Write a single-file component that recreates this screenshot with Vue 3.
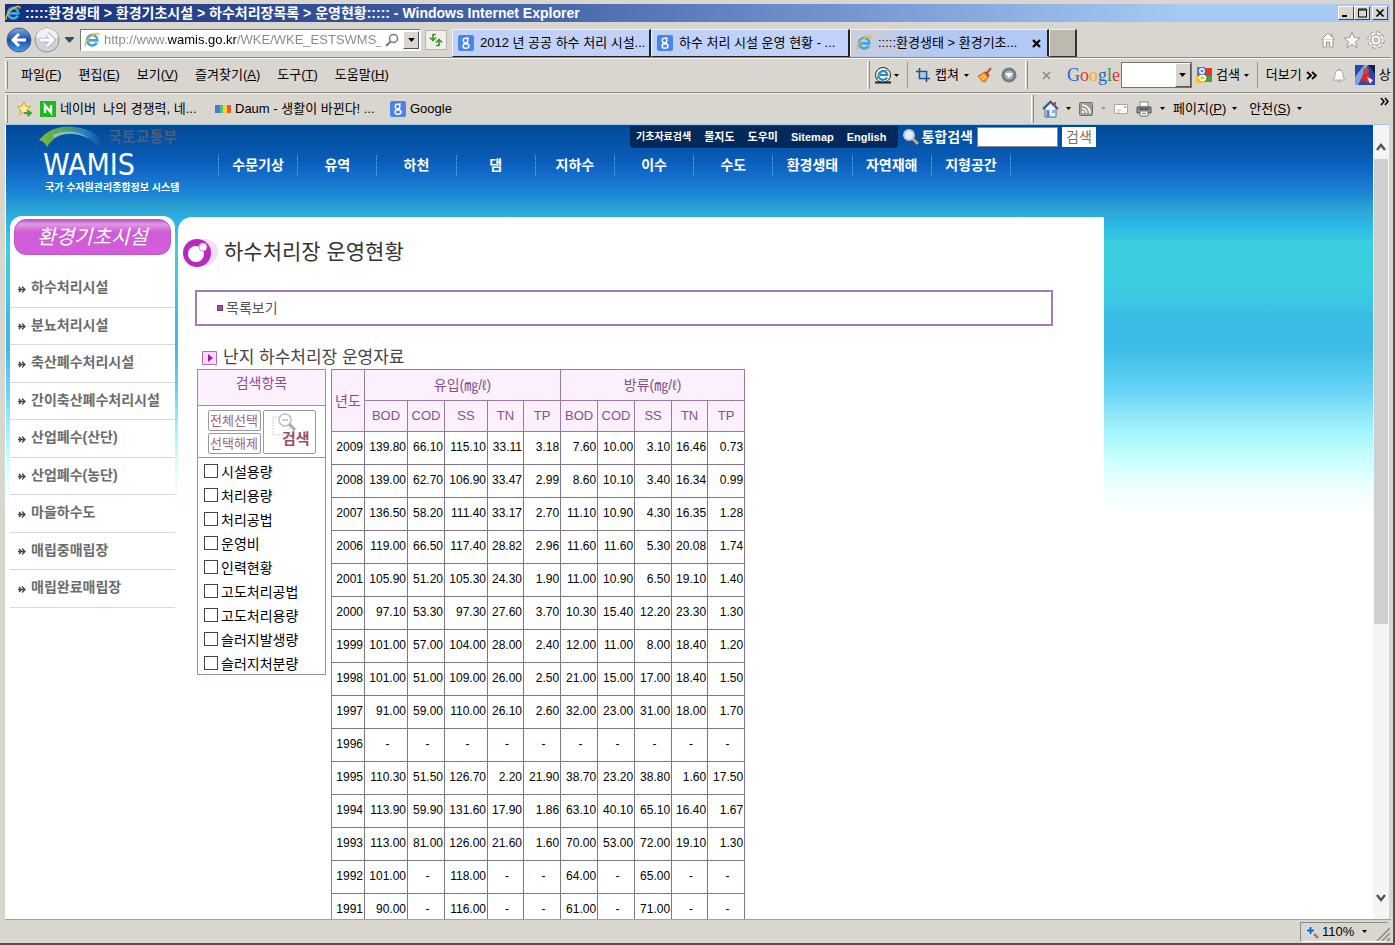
<script setup>
import { ref } from 'vue'

const url = ref('http://www.wamis.go.kr/WKE/WKE_ESTSWMS_LIST.aspx')
const keyword = ref('')
const toolbarKeyword = ref('')

const menus = [
  ['파일', 'F'], ['편집', 'E'], ['보기', 'V'], ['즐겨찾기', 'A'], ['도구', 'T'], ['도움말', 'H'],
]
const tabs = [
  { icon: 'g8', text: '2012 년 공공 하수 처리 시설...' },
  { icon: 'g8', text: '하수 처리 시설 운영 현황 - ...' },
  { icon: 'ie', text: ':::::환경생태 > 환경기초...', active: true },
]
const nav = ['수문기상', '유역', '하천', '댐', '지하수', '이수', '수도', '환경생태', '자연재해', '지형공간']
const utils = ['기초자료검색', '물지도', '도우미', 'Sitemap', 'English']
const side = [
  '하수처리시설', '분뇨처리시설', '축산폐수처리시설', '간이축산폐수처리시설', '산업폐수(산단)',
  '산업폐수(농단)', '마을하수도', '매립중매립장', '매립완료매립장',
]
const filters = ref([
  '시설용량', '처리용량', '처리공법', '운영비', '인력현황', '고도처리공법', '고도처리용량', '슬러지발생량', '슬러지처분량',
].map((name) => ({ name, on: false })))
const setAll = (on) => filters.value.forEach((f) => { f.on = on })

const columns = ['BOD', 'COD', 'SS', 'TN', 'TP', 'BOD', 'COD', 'SS', 'TN', 'TP']
const rows = [
  '2009 139.80 66.10 115.10 33.11 3.18 7.60 10.00 3.10 16.46 0.73',
  '2008 139.00 62.70 106.90 33.47 2.99 8.60 10.10 3.40 16.34 0.99',
  '2007 136.50 58.20 111.40 33.17 2.70 11.10 10.90 4.30 16.35 1.28',
  '2006 119.00 66.50 117.40 28.82 2.96 11.60 11.60 5.30 20.08 1.74',
  '2001 105.90 51.20 105.30 24.30 1.90 11.00 10.90 6.50 19.10 1.40',
  '2000 97.10 53.30 97.30 27.60 3.70 10.30 15.40 12.20 23.30 1.30',
  '1999 101.00 57.00 104.00 28.00 2.40 12.00 11.00 8.00 18.40 1.20',
  '1998 101.00 51.00 109.00 26.00 2.50 21.00 15.00 17.00 18.40 1.50',
  '1997 91.00 59.00 110.00 26.10 2.60 32.00 23.00 31.00 18.00 1.70',
  '1996 - - - - - - - - - -',
  '1995 110.30 51.50 126.70 2.20 21.90 38.70 23.20 38.80 1.60 17.50',
  '1994 113.90 59.90 131.60 17.90 1.86 63.10 40.10 65.10 16.40 1.67',
  '1993 113.00 81.00 126.00 21.60 1.60 70.00 53.00 72.00 19.10 1.30',
  '1992 101.00 - 118.00 - - 64.00 - 65.00 - -',
  '1991 90.00 - 116.00 - - 61.00 - 71.00 - -',
].map((r) => r.split(' '))
</script>

<template>
  <div class="window">
    <svg class="sprite" aria-hidden="true">
      <symbol id="ie" viewBox="0 0 16 16">
        <path d="M12.8 10.6A5.2 5.2 0 1 1 13.4 8.4H4.6" fill="none" stroke="#3fa9e6" stroke-width="2.6" />
        <path d="M1.6 14.6C-.4 12 4 5.600 9 2.800 12.500 .9 15.300 .8 14.800 3.600" fill="none" stroke="#f0b92c" stroke-width="1.4" />
      </symbol>
      <symbol id="g8" viewBox="0 0 16 16">
        <rect width="16" height="16" rx="2" fill="#4a86e8" />
        <circle cx="7.600" cy="5.400" r="2.300" fill="none" stroke="#fff" stroke-width="1.400" />
        <ellipse cx="8" cy="11" rx="3" ry="2.300" fill="none" stroke="#fff" stroke-width="1.400" />
        <path d="M8 3h3M8.500 7.500l1 1.400" stroke="#fff" stroke-width="1.200" />
      </symbol>
      <symbol id="down" viewBox="0 0 5 3"><path d="M0 0h5L2.500 3z" fill="currentColor" /></symbol>
    </svg>

    <header class="titlebar">
      <svg class="i16"><use href="#ie" /></svg>
      <h1>:::::환경생태 &gt; 환경기초시설 &gt; 하수처리장목록 &gt; 운영현황::::: - Windows Internet Explorer</h1>
      <div class="winbtns">
        <button aria-label="최소화"><svg viewBox="0 0 12 12"><path d="M2 9h5" stroke="#000" stroke-width="2" /></svg></button>
        <button aria-label="최대화"><svg viewBox="0 0 12 12"><path d="M2.500 2h8v8h-8zM2 3h9" fill="none" stroke="#000" /></svg></button>
        <button aria-label="닫기" class="close"><svg viewBox="0 0 12 12"><path d="M2.500 2.500l7 7M9.500 2.500l-7 7" stroke="#000" stroke-width="1.600" /></svg></button>
      </div>
    </header>

    <div class="addressrow">
      <button class="plain" aria-label="뒤로">
        <svg class="i26" viewBox="0 0 26 26">
          <defs><linearGradient id="bk" x1="0" y1="0" x2="0" y2="1"><stop offset="0" stop-color="#7fa6dc" /><stop offset=".5" stop-color="#1d4fae" /><stop offset="1" stop-color="#3fa4ee" /></linearGradient></defs>
          <circle cx="13" cy="13" r="12" fill="url(#bk)" stroke="#50617c" />
          <path d="M20 13H8M13 7l-6 6 6 6" fill="none" stroke="#fff" stroke-width="3" />
        </svg>
      </button>
      <button class="plain" aria-label="앞으로">
        <svg class="i26" viewBox="0 0 26 26">
          <circle cx="13" cy="13" r="12" fill="#cfd3d9" stroke="#8d939e" />
          <path d="M2 11a11 10 0 0 1 22 0z" fill="#eef0f3" />
          <path d="M6 13h12M13 7l6 6-6 6" fill="none" stroke="#a9afba" stroke-width="4.600" />
          <path d="M6 13h12M13 7l6 6-6 6" fill="none" stroke="#fff" stroke-width="2.800" />
        </svg>
      </button>
      <button class="plain hist" aria-label="최근 페이지"><svg viewBox="0 0 9 6"><path d="M0 0h9v1L4.500 6 0 1z" fill="#23566e" /></svg></button>
      <div class="address">
        <svg class="i16"><use href="#ie" /></svg>
        <input v-model="url" aria-label="주소" />
        <svg class="i14" viewBox="0 0 14 14"><circle cx="8.500" cy="5.500" r="4" fill="none" stroke="#777" stroke-width="1.500" /><path d="M5.500 8.500L1 13" stroke="#777" stroke-width="2" /></svg>
        <button class="drop" aria-label="주소 목록"><svg class="arrow big"><use href="#down" /></svg></button>
      </div>
      <button class="refresh" aria-label="새로 고침"><svg class="i16" viewBox="0 0 16 16"><path d="M8 2.500H5v5M2 5.500l3 3 3-3" fill="none" stroke="#3e9a34" stroke-width="1.700" /><path d="M8 13.500h3v-5M8 10.500l3-3 3 3" fill="none" stroke="#3e9a34" stroke-width="1.700" /></svg></button>
      <nav class="tabs" aria-label="탭">
        <button v-for="t in tabs" :key="t.text" class="tab" :class="{ active: t.active }">
          <svg class="i16"><use :href="'#' + t.icon" /></svg>
          <span>{{ t.text }}</span>
          <svg v-if="t.active" class="i9" viewBox="0 0 9 9"><path d="M1 1l7 7M8 1L1 8" stroke="#000" stroke-width="2.200" /></svg>
        </button>
        <button class="newtab" aria-label="새 탭"></button>
      </nav>
      <div class="tools">
        <svg class="i18" viewBox="0 0 18 18"><path d="M2 9l7-7 7 7M4 8v8h3.500v-5h3v5H14V8M13 6V2.500" fill="#fff" stroke="#a09a92" /></svg>
        <svg class="i18" viewBox="0 0 18 18"><path d="M9 1l2.200 5.600 5.800.4-4.500 3.700 1.500 5.800L9 13.300l-5 3.200 1.500-5.800L1 7l5.800-.4z" fill="#fff" stroke="#a09a92" /></svg>
        <svg class="i18" viewBox="0 0 18 18"><circle cx="9" cy="9" r="7" fill="none" stroke="#a09a92" stroke-width="3.400" stroke-dasharray="3.300 2.200" /><circle cx="9" cy="9" r="6.500" fill="none" stroke="#fff" stroke-width="2.500" stroke-dasharray="2.500 2.600" /><circle cx="9" cy="9" r="5" fill="#fff" stroke="#a09a92" /><circle cx="9" cy="9" r="2" fill="#d9d5cf" stroke="#a09a92" /></svg>
      </div>
    </div>

    <div class="bar">
      <i class="grip"></i>
      <nav class="menus" aria-label="메뉴">
        <button v-for="m in menus" :key="m[1]" class="plain">{{ m[0] }}(<u>{{ m[1] }}</u>)</button>
      </nav>
      <div class="addons">
        <i class="grip"></i>
        <button class="plain duo iebtn" aria-label="브라우저 도구">
          <svg class="i18" viewBox="0 0 18 18"><circle cx="9" cy="9" r="7.500" fill="#f3fbff" stroke="#222" /><path d="M13 11.500A4.500 4.500 0 1 1 13.500 9H6" fill="none" stroke="#2b86c9" stroke-width="2" /><path d="M3 14C3 9 9 4 14 4" fill="none" stroke="#49aa4a" /><path d="M1 16.500h16" stroke="#222" stroke-width="2" /></svg>
          <svg class="arrow"><use href="#down" /></svg>
        </button>
        <i class="sep"></i>
        <button class="plain duo cap">
          <svg class="i14" viewBox="0 0 14 14"><path d="M3.500 0v10.500H14M0 3.500h10.500V14" fill="none" stroke="#1f4f85" stroke-width="1.600" /><path d="M4.500 4.500h5v5h-5z" fill="#8fd0ef" /></svg>
          캡쳐 <svg class="arrow"><use href="#down" /></svg>
        </button>
        <svg class="i16" viewBox="0 0 16 16"><path d="M14 1L9 7" stroke="#b0562a" stroke-width="2" /><path d="M8 5l4 4-4 6-3-1-4-5z" fill="#f0a028" stroke="#a86414" stroke-width=".8" /><path d="M8 5l4 4" stroke="#c33" stroke-width="2" /><path d="M4 9l3 4M6 7.500l3 4" stroke="#ffe090" /></svg>
        <svg class="i16 orb" viewBox="0 0 16 16"><circle cx="8" cy="8" r="7.500" fill="#717c87" /><circle cx="8" cy="8" r="4.500" fill="#a8b4be" /><path d="M4 6h8l-4 5z" fill="#fff" /></svg>
        <i class="grip orb"></i>
        <button class="plain xbtn" aria-label="도구 모음 닫기"><svg class="i9" viewBox="0 0 9 9"><path d="M1 1l7 7M8 1L1 8" stroke="#8d8983" stroke-width="1.600" /></svg></button>
        <span class="glogo"><span class="cb">G</span><span class="cr">o</span><span class="cy">o</span><span class="cb">g</span><span class="cg">l</span><span class="cr">e</span></span>
        <div class="gsearch">
          <input v-model="toolbarKeyword" aria-label="Google 검색" />
          <button class="drop" aria-label="검색어 목록"><svg class="arrow big"><use href="#down" /></svg></button>
        </div>
        <button class="plain duo gbtn">
          <svg class="i16" viewBox="0 0 16 16"><path d="M1 0h8v9H1z" fill="#4a7be0" /><path d="M9 1h7v8H9z" fill="#d93a2f" /><path d="M9 9h7v6H9z" fill="#3aa34c" /><path d="M0 9h9v7H0z" fill="#f4c42c" /><circle cx="6" cy="4" r="2.200" fill="none" stroke="#fff" stroke-width="1.500" /><ellipse cx="6.500" cy="11" rx="3" ry="2.500" fill="none" stroke="#fff" stroke-width="1.500" /></svg>
          검색 <svg class="arrow"><use href="#down" /></svg>
        </button>
        <i class="sep dotted"></i>
        <button class="plain more">더보기 <svg class="chev" viewBox="0 0 11 9"><path d="M1 1l4 3.500L1 8M6 1l4 3.500L6 8" fill="none" stroke="#000" stroke-width="1.800" /></svg></button>
        <svg class="i16 bell" viewBox="0 0 16 16"><path d="M2 13c2-2 2-4 2-6a4 4 0 0 1 8 0c0 2 0 4 2 6zM6.500 14.500h3M8 1v2" fill="#fff" stroke="#aaa59e" /></svg>
        <svg class="i20 avatar" viewBox="0 0 20 20"><path d="M0 0h20v20H0z" fill="#2447a8" /><path d="M0 12L9 0h4L3 20H0z" fill="#79a4e8" /><path d="M13 0h7v9z" fill="#151d4f" /><circle cx="11" cy="6" r="3" fill="#c04a3c" /><path d="M5 18l3-9h6l4 9-4-3-3 5-2-5z" fill="#d42a30" /><path d="M12 12l6 3-3 4z" fill="#e3e8f5" /></svg>
        <span class="user">상보</span>
      </div>
    </div>

    <div class="bar favs">
      <i class="grip"></i>
      <svg class="i16" viewBox="0 0 16 16"><path d="M7 1l1.800 4.200 4.700.4-3.600 3.200 1 4.700L7 11l-4.200 2.500 1.100-4.700L.4 5.600l4.700-.4z" fill="#fff0a0" stroke="#e0a02c" /><path d="M7 12h6M10.500 9.500L14 12l-3.500 3" fill="none" stroke="#3fa43d" stroke-width="2" /></svg>
      <a href="#naver" class="fav"><svg class="i16" viewBox="0 0 16 16"><path d="M0 0h16v16H0z" fill="#1bb81b" /><path d="M5 12V4.500l6 7V4" fill="none" stroke="#fff" stroke-width="2.400" /></svg>네이버&nbsp; 나의 경쟁력, 네...</a>
      <a href="#daum" class="fav"><svg class="i16" viewBox="0 0 16 16"><path d="M0 4h5v8H0z" fill="#3e7be0" /><path d="M5 4h4v8H5z" fill="#5bbd6c" /><path d="M8 4h4v8H8z" fill="#ffd32e" /><path d="M12 4h4v8h-4z" fill="#f0592b" /></svg>Daum - 생활이 바뀐다! ...</a>
      <a href="#google" class="fav"><svg class="i16"><use href="#g8" /></svg>Google</a>
      <div class="cmds">
        <i class="grip"></i>
        <button class="plain duo home" aria-label="홈">
          <svg class="i18" viewBox="0 0 18 18"><path d="M3 8v9h11V8L8.500 3z" fill="#eef3fb" stroke="#53658f" /><path d="M1 9l7.500-7.500L16 9" fill="none" stroke="#37518c" stroke-width="1.800" /><path d="M4.500 10h3v7h-3z" fill="#5d82c4" /><path d="M10 10h3v3h-3z" fill="#87aee0" /><path d="M12 2h2v4h-2z" fill="#b05040" /></svg>
          <svg class="arrow"><use href="#down" /></svg>
        </button>
        <button class="plain duo dim" aria-label="피드">
          <svg class="i14" viewBox="0 0 14 14"><rect x=".5" y=".5" width="13" height="13" rx="1" fill="#a09c96" stroke="#75716b" /><path d="M3 6.500a4.500 4.500 0 0 1 4.500 4.500M3 3a8 8 0 0 1 8 8" fill="none" stroke="#fff" stroke-width="1.600" /><circle cx="4" cy="10" r="1.200" fill="#fff" /></svg>
          <svg class="arrow"><use href="#down" /></svg>
        </button>
        <svg class="i14" viewBox="0 0 14 14"><path d="M.5 2.500h13v9H.5z" fill="#fff" stroke="#aaa59e" /><path d="M3 8h4M3 10h3" stroke="#bbb" /><path d="M10 4h2v2h-2z" fill="#c9a8a0" /></svg>
        <button class="plain duo print" aria-label="인쇄">
          <svg class="i16" viewBox="0 0 16 16"><path d="M4 1h8v5H4z" fill="#fff" stroke="#888" /><path d="M1 6h14v6H1z" fill="#8f949a" stroke="#555" /><path d="M3 8h10" stroke="#333" /><path d="M4 10h8v5H4z" fill="#f6fbf6" stroke="#777" /><path d="M6 12.500h4" stroke="#4a9a58" /></svg>
          <svg class="arrow"><use href="#down" /></svg>
        </button>
        <button class="plain duo word"><span>페이지(<u>P</u>)</span><svg class="arrow"><use href="#down" /></svg></button>
        <button class="plain duo word"><span>안전(<u>S</u>)</span><svg class="arrow"><use href="#down" /></svg></button>
        <button class="plain overflow" aria-label="더 보기"><svg class="chev" viewBox="0 0 11 9"><path d="M1 1l3 3.500L1 8M5 1l3 3.500L5 8" fill="none" stroke="#000" stroke-width="1.500" /></svg></button>
      </div>
    </div>

    <div class="view">
      <div class="page">
        <div class="site">
          <header class="head">
            <a href="#home" class="logo">
              <span class="ministry">
                <svg viewBox="0 0 66 22">
                  <defs><linearGradient id="sw" x1="0" x2="1"><stop offset="0" stop-color="#7dbb3c" /><stop offset=".45" stop-color="#4d9c62" /><stop offset=".7" stop-color="#2a7fc0" /><stop offset="1" stop-color="#0a4ea0" /></linearGradient></defs>
                  <path d="M0 14C10 2 24-1 36 1 52 3 60 9 64 18L58 20C52 12 44 8 33 7 22 7 14 12 8 21 6 17 4 15 0 14z" fill="url(#sw)" />
                  <path d="M14 9C26 3 42 5 50 13 40 7 26 6 14 12z" fill="#9ed2e8" opacity=".7" />
                </svg>
                국토교통부
              </span>
              <strong>WAMIS</strong>
              <small>국가 수자원관리종합정보 시스템</small>
            </a>
            <div class="headmain">
              <div class="top">
                <nav class="utils" aria-label="바로가기"><a v-for="u in utils" :key="u" :href="'#' + u">{{ u }}</a></nav>
                <form class="search" @submit.prevent>
                  <svg class="i18" viewBox="0 0 18 18"><path d="M10 10l6 6" stroke="#c9a67c" stroke-width="3" /><circle cx="7" cy="7" r="5" fill="#dcecf8" stroke="#b9c6d6" stroke-width="2" /></svg>
                  <label for="kw">통합검색</label>
                  <input id="kw" v-model="keyword" />
                  <button>검색</button>
                </form>
              </div>
              <nav class="gnb" aria-label="주 메뉴"><a v-for="n in nav" :key="n" :href="'#' + n">{{ n }}</a></nav>
            </div>
          </header>

          <div class="body">
            <aside class="side">
              <h2>환경기초시설</h2>
              <ul>
                <li v-for="s in side" :key="s">
                  <a :href="'#' + s"><svg class="i9" viewBox="0 0 9 9"><path d="M0 4.500h7M4 1.500l3 3-3 3M1 2l2 2M1 7l2-2" fill="none" stroke="#444" stroke-width="1.300" /></svg>{{ s }}</a>
                </li>
              </ul>
            </aside>
            <main class="main">
              <h2 class="title">
                <svg viewBox="0 0 36 32">
                  <circle cx="22" cy="16" r="13" fill="#fbdcfa" />
                  <circle cx="14" cy="17" r="14" fill="#b829c0" />
                  <circle cx="13" cy="18" r="8" fill="#fff" />
                  <circle cx="20" cy="11" r="4" fill="#fff" stroke="#d88add" />
                </svg>
                하수처리장 운영현황
              </h2>
              <div class="listbox"><a href="#list"><i></i>목록보기</a></div>
              <h3><svg viewBox="0 0 15 14"><path d="M.5 .5h14v13H.5z" fill="#fbd9fb" stroke="#b46cba" /><path d="M6 3l5 4-5 4z" fill="#a01ca8" /></svg>난지 하수처리장 운영자료</h3>
              <div class="data">
                <form class="filter" @submit.prevent>
                  <h4>검색항목</h4>
                  <div class="fbtns">
                    <div>
                      <button type="button" @click="setAll(true)">전체선택</button>
                      <button type="button" @click="setAll(false)">선택해제</button>
                    </div>
                    <button class="go">
                      <svg viewBox="0 0 28 28"><path d="M8 6H1v18h10" fill="none" stroke="#ccc" stroke-dasharray="2 1" /><circle cx="13" cy="9" r="6" fill="#fff" stroke="#ccc" stroke-width="2" /><path d="M17 13l6 6" stroke="#aaa" stroke-width="3" /><path d="M10 9h6" stroke="#ccc" stroke-width="2" /></svg>
                      <span>검색</span>
                    </button>
                  </div>
                  <label v-for="f in filters" :key="f.name"><input v-model="f.on" type="checkbox" />{{ f.name }}</label>
                </form>
                <table>
                  <colgroup><col class="w33" /><col class="w43" /><col /><col class="w43" /><col class="w36" /><col /><col /><col /><col /><col class="w36" /><col /></colgroup>
                  <thead>
                    <tr class="groups"><th rowspan="2">년도</th><th colspan="5">유입(㎎/ℓ)</th><th colspan="5">방류(㎎/ℓ)</th></tr>
                    <tr><th v-for="(c, i) in columns" :key="i">{{ c }}</th></tr>
                  </thead>
                  <tbody>
                    <tr v-for="r in rows" :key="r[0]">
                      <td v-for="(v, i) in r" :key="i" :class="{ none: v === '-' }">{{ v }}</td>
                    </tr>
                  </tbody>
                </table>
              </div>
            </main>
          </div>
        </div>
      </div>
      <div class="scroll" aria-hidden="true">
        <svg viewBox="0 0 14 34"><path d="M3 25l4-5 4 5" fill="none" stroke="#555" stroke-width="2.400" /></svg>
        <div class="track"><i></i></div>
        <svg viewBox="0 0 14 34"><path d="M3 10l4 5 4-5" fill="none" stroke="#555" stroke-width="2.400" /></svg>
      </div>
    </div>

    <footer class="status">
      <button class="zoom">
        <svg class="i14" viewBox="0 0 14 14"><path d="M8.500 8.500l4.500 4.500" stroke="#a87454" stroke-width="2.400" /><circle cx="5.500" cy="5.500" r="5" fill="#cfe4fa" /><path d="M5.500 2v7M2 5.500h7" stroke="#1c5fc8" stroke-width="2" /></svg>
        110% <svg class="arrow"><use href="#down" /></svg>
      </button>
      <svg class="i14 size" viewBox="0 0 14 14"><path d="M1 14L14 1M6 14l8-8M11 14l3-3" stroke="#8d8983" stroke-width="1.500" /></svg>
    </footer>
  </div>
</template>

<style>
body { overflow: hidden; }
</style>

<style scoped>
* { box-sizing: border-box; margin: 0; padding: 0; }
.window {
  height: 100vh; display: flex; flex-direction: column; padding: 4px 2px 0 5px;
  background: #d9d5cf; border-right: 2px solid #55524e; border-bottom: 2px solid #55524e;
  font: 13px/18px "Liberation Sans", "Noto Sans CJK KR", sans-serif; color: #000;
}
.sprite { position: absolute; width: 0; height: 0; }
button, input { font: inherit; color: inherit; border-radius: 0; }
button { white-space: nowrap; cursor: pointer; }
a { color: inherit; text-decoration: none; }
svg { display: block; flex: none; }
ul { list-style: none; }
.i9 { width: 9px; height: 9px; }
.i14 { width: 14px; height: 14px; }
.i16 { width: 16px; height: 16px; }
.i18 { width: 18px; height: 18px; }
.i20 { width: 20px; height: 20px; }
.i26 { width: 26px; height: 26px; }
.arrow { width: 5px; height: 3px; }
.arrow.big { width: 7px; height: 4px; }
.plain { border: 0; background: none; flex: none; }
.duo { display: flex; align-items: center; gap: 4px; }

.titlebar { flex: none; height: 18px; margin-right: 1px; display: flex; align-items: center; gap: 4px; background: linear-gradient(90deg, #14307c, #4a68ac 40%, #7898d4 62%, #a6caf4 85%); }
.titlebar h1 { flex: 1; min-width: 0; overflow: hidden; white-space: nowrap; font-size: 14px; line-height: 18px; color: #fff; }
.winbtns { display: flex; padding-right: 2px; }
.winbtns button { width: 16px; height: 14px; display: grid; place-items: center; background: #d9d5cf; border: 1px solid; border-color: #fff #444 #444 #fff; }
.winbtns .close { margin-left: 2px; }
.winbtns svg { width: 12px; height: 12px; }

.addressrow { flex: none; height: 35px; display: flex; align-items: center; }
.addressrow > .plain { margin: 0 1px; }
.addressrow > .hist { margin: 0 6px 0 4px; }
.hist svg { width: 9px; height: 6px; }
.address { width: 341px; height: 22px; display: flex; align-items: center; gap: 4px; padding: 1px 1px 1px 3px; background: #fff; border: 1px solid; border-color: #777 #fff #fff #777; }
.address input {
  flex: 1; min-width: 0; border: 0; outline: 0; font-size: 13px; color: transparent;
  background: linear-gradient(90deg, #888 64px, #000 64px, #000 133px, #888 133px); background-clip: text; -webkit-background-clip: text;
}
.drop { width: 16px; height: 100%; flex: none; display: grid; place-items: center; background: #d9d5cf; border: 1px solid; border-color: #fff #555 #555 #fff; }
.refresh { width: 22px; height: 20px; margin: 0 5px 0 4px; flex: none; display: grid; place-items: center; background: #f1f0ec; border: 1px solid #bbb6ae; }
.tabs { align-self: flex-end; display: flex; height: 28px; }
.tab { width: 199px; display: flex; align-items: center; gap: 6px; padding: 0 2px 0 5px; background: #c0d2fa; border: 1px solid; border-color: #eef3ff #222 #222 #eef3ff; border-right-width: 2px; text-align: left; }
.tab span { flex: 1; }
.tab.active { padding-right: 6px; border-bottom-color: #b4c8ee; background: linear-gradient(90deg, #cdcfd6, #b4c8f4 40%); }
.newtab { width: 28px; background: #bdb9ae; border: 1px solid; border-color: #f1efea #333 #333 #f1efea; border-right-width: 2px; }
.tools { margin-left: auto; padding-right: 6px; display: flex; gap: 6px; }

.bar { flex: none; height: 35px; display: flex; align-items: center; border-top: 1px solid #8d8a85; box-shadow: inset 0 1px #f6f4f1; overflow: hidden; }
.grip { flex: none; width: 3px; height: 28px; border-left: 1px solid #fff; border-right: 1px solid #8d8a85; }
.sep { flex: none; width: 1px; height: 26px; background: #9a968f; }
.menus { display: flex; gap: 17px; padding-left: 13px; }
.addons { margin-left: auto; width: 524px; display: flex; align-items: center; gap: 4px; white-space: nowrap; }
.addons .iebtn { gap: 2px; margin-right: 4px; }
.addons .sep { margin-right: 4px; }
.addons .cap { gap: 5px; margin-right: 4px; }
.addons .orb { margin-left: 4px; }
.addons .xbtn { margin: 0 12px 0 10px; }
.glogo { font: 18px/22px "Liberation Serif", serif; width: 50px; }
.cb { color: #2a62d8; } .cr { color: #dc3a32; } .cy { color: #f0b020; } .cg { color: #2c9c44; }
.gsearch { flex: none; width: 71px; height: 26px; display: flex; background: #fff; border: 1px solid #77736e; }
.gsearch input { flex: 1; min-width: 0; border: 0; outline: 0; }
.addons .gbtn { margin-right: 4px; }
.more { display: flex; align-items: center; gap: 4px; }
.chev { width: 11px; height: 9px; }
.bell { margin-left: 10px; }
.avatar { margin-left: 4px; }
.favs { height: 32px; }
.favs > .i16 { margin: 0 7px 0 9px; }
.fav { display: flex; align-items: center; gap: 4px; white-space: nowrap; width: 175px; }
.cmds { margin-left: auto; width: 360px; display: flex; align-items: center; gap: 8px; }
.cmds .duo { gap: 8px; }
.cmds .home { gap: 6px; }
.cmds .dim .arrow { color: #999; }
.cmds .word { gap: 6px; margin-right: 4px; }
.cmds .overflow { margin-left: auto; align-self: flex-start; padding: 2px 0; }

.view { flex: 1; min-height: 0; display: flex; margin-right: 2px; padding-left: 1px; border-top: 1px solid #9bc8ea; background: #fff; overflow: hidden; }
.page {
  flex: 1; min-width: 0; overflow: hidden;
  background: linear-gradient(180deg, #004a96 0, #0a5cb8 35px, #1470cc 52px, #1a85d6 68px, #2a9fd0 82px, #2cb5e6 97px, #3acfe0 120px, #3acde0 148px, #3cc8e4 175px, #3abce6 190px, #3abce6 222px, #50c8ee 242px, #66d2f6 265px, #88e4f6 285px, #a4f4fc 308px, #c0fefc 328px, #d4ffff 342px, #eeffff 362px, #fff 390px);
}
.site { max-width: 1098px; }
.head { height: 91px; display: flex; color: #fff; }
.logo { flex: none; width: 212px; padding-left: 33px; display: flex; flex-direction: column; }
.ministry { display: flex; align-items: center; gap: 3px; font-size: 15px; line-height: 24px; font-weight: bold; color: #4a5f78; }
.ministry svg { width: 66px; height: 22px; }
.logo strong { font: 30px/32px "DejaVu Sans Condensed", "DejaVu Sans", sans-serif; padding-left: 4px; }
.logo small { font-size: 10px; line-height: 14px; font-weight: bold; padding-left: 6px; white-space: nowrap; }
.headmain { flex: 1; min-width: 0; }
.top { display: flex; justify-content: flex-end; align-items: center; gap: 4px; padding-right: 8px; height: 24px; }
.utils { display: flex; align-items: center; gap: 13px; height: 22px; padding: 0 12px 0 6px; background: #03285a; border-radius: 0 0 4px 4px; font-size: 11px; font-weight: bold; white-space: nowrap; }
.utils a:first-child { font-size: 10px; }
.search { display: flex; align-items: center; }
.search label { font-size: 14px; font-weight: bold; padding: 0 4px 0 1px; }
.search input { width: 81px; height: 20px; background: #fff; border: 1px solid #8a8a8a; color: #000; }
.search button { width: 34px; height: 20px; margin-left: 4px; border: 0; background: #fff; color: #77715f; font-size: 14px; }
.gnb { display: grid; grid-template-columns: repeat(10, 1fr); width: 793px; margin-top: 6px; border-left: 1px dotted #7fb4e8; }
.gnb a { line-height: 21px; font-size: 14px; font-weight: bold; text-align: center; border-right: 1px dotted #7fb4e8; }

.body { display: flex; align-items: flex-start; gap: 3px; padding-left: 4px; }
.side { flex: none; width: 165px; padding: 3px 4px 0; background: #fff; border-radius: 12px 12px 0 0; }
.side h2 { height: 36px; border-radius: 12px; font-size: 20px; line-height: 34px; font-weight: normal; font-style: italic; text-align: center; color: #fff; background: linear-gradient(#b45cc4, #e09ae4 4px, #cf5cd6 12px, #d65cdc); border: 1px solid #b85cc4; }
.side ul { margin: 15px -4px 0; height: 338px; display: grid; grid-auto-rows: 1fr; }
.side li { border-bottom: 1px solid #d8d8d8; }
.side a { display: flex; align-items: center; gap: 4px; height: 34px; padding-left: 8px; font-size: 14px; font-weight: bold; color: #6b6b6b; white-space: nowrap; }
.side a .i9 { margin-top: 4px; }
.main { flex: 1; min-width: 0; margin-top: 1px; padding: 18px 51px 0 17px; background: #fff; border-radius: 14px 0 0 0; }
.title { display: flex; align-items: center; gap: 5px; margin-left: -12px; font-size: 21px; line-height: 34px; font-weight: normal; color: #333; }
.title svg { width: 36px; height: 32px; }
.listbox { margin-top: 21px; height: 36px; border: 2px solid #a77bb5; padding-left: 20px; }
.listbox a { display: inline-flex; align-items: center; gap: 3px; line-height: 32px; font-size: 14px; color: #555; }
.listbox i { width: 6px; height: 6px; background: #b0479f; border: 1px solid #7e2d74; }
.main h3 { display: flex; align-items: center; gap: 6px; margin: 21px 0 0 7px; font-size: 17px; line-height: 22px; font-weight: normal; color: #444; }
.main h3 svg { width: 15px; height: 14px; }
.data { display: flex; align-items: flex-start; gap: 5px; margin-left: 2px; }
.filter { width: 129px; flex: none; border: 1px solid #a588b0; font-size: 14px; }
.filter h4 { height: 36px; line-height: 26px; text-align: center; font-weight: normal; color: #86508c; background: #fcf0fd; border-bottom: 1px solid #a588b0; }
.fbtns { height: 52px; display: flex; align-items: center; justify-content: center; gap: 2px; border-bottom: 1px solid #a588b0; }
.fbtns div { display: grid; gap: 2px; }
.fbtns button { width: 53px; height: 21px; font-size: 13px; line-height: 17px; color: #a5627c; background: #fff; border: 1px solid #999; border-radius: 2px; }
.fbtns .go { width: 53px; height: 44px; display: grid; }
.go > * { grid-area: 1 / 1; }
.go svg { width: 28px; height: 28px; margin-left: 8px; }
.go span { align-self: end; justify-self: end; margin: 0 5px 6px 0; font-size: 15px; font-weight: bold; color: #984e6a; }
.filter label { display: flex; align-items: center; gap: 3px; height: 24px; padding: 3px 0 0 6px; }
.filter label input { appearance: none; width: 14px; height: 14px; margin-bottom: 2px; border: 1px solid #444; background: #fff; }
.filter label input:checked { background: #86508c; }
table { width: 414px; table-layout: fixed; border-collapse: collapse; font-size: 12px; line-height: 16px; }
col { width: 37px; }
.w33 { width: 33px; } .w43 { width: 43px; } .w36 { width: 36px; }
th { height: 31px; font-weight: normal; font-size: 13px; color: #86508c; background: #fcf0fd; border: 1px solid #9a78a8; white-space: nowrap; }
.groups th { font-size: 14px; }
td { height: 33px; text-align: right; padding: 0 1px 2px 0; border: 1px solid #7f7788; border-left-color: #8d80a0; }
.none { text-align: center; padding-left: 4px; }
.scroll { flex: none; width: 16px; display: flex; flex-direction: column; padding: 0 1px; background: #f4f4f4; }
.scroll svg { width: 14px; height: 34px; }
.track { flex: 1; }
.track i { display: block; height: 64%; background: #cfcfcf; }
.status { flex: none; height: 24px; display: flex; justify-content: flex-end; align-items: center; border-top: 1px solid #a5a29b; }
.zoom { width: 88px; height: 20px; display: flex; align-items: center; gap: 3px; padding: 0 20px 0 4px; background: none; border: 1px solid; border-color: #8d8a85 #d9d5cf #fff #8d8a85; }
.zoom .arrow { margin-left: auto; }
.size { margin: 4px 1px 0 -12px; }
</style>
